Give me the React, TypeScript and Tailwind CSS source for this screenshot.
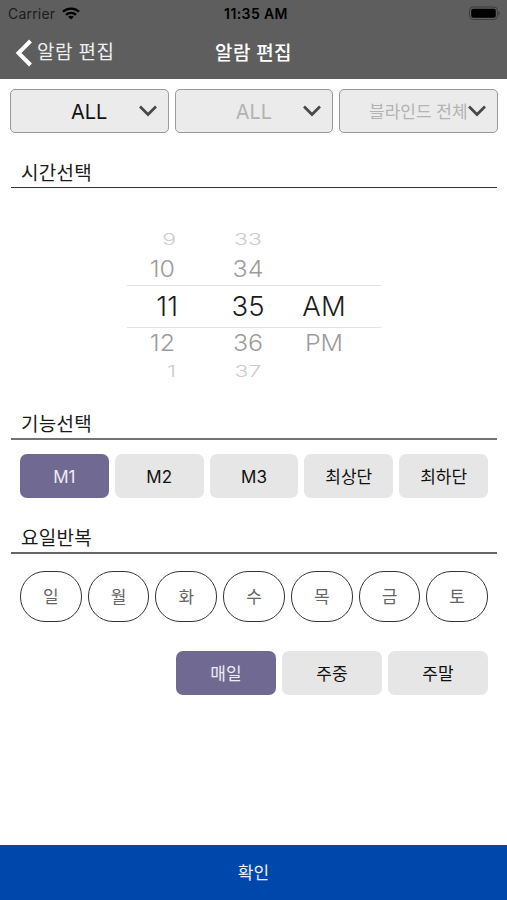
import React from "react";

interface ButtonItem {
  label: string;
  selected?: boolean;
}

interface PickerRow {
  hour: string;
  minute: string;
  period: string;
  rowClass: string;
  hourClass: string;
  textClass: string;
}

const filters = [
  { label: "ALL", textClass: "pt-[1px] pl-[1px] text-[20px] text-[#111111]" },
  { label: "ALL", textClass: "pt-[1px] pl-[1px] text-[20px] text-[#b3b3b3]" },
  { label: "블라인드 전체", textClass: "pt-[4px] text-[17px] text-[#b3b3b3]" },
];

const functions: ButtonItem[] = [
  { label: "M1", selected: true },
  { label: "M2" },
  { label: "M3" },
  { label: "최상단" },
  { label: "최하단" },
];

const days = ["일", "월", "화", "수", "목", "금", "토"];

const repeats: ButtonItem[] = [
  { label: "매일", selected: true },
  { label: "주중" },
  { label: "주말" },
];

const pickerRows: PickerRow[] = [
  { hour: "9", minute: "33", period: "", rowClass: "h-[26px]", hourClass: "pr-[5px]", textClass: "text-[23px] font-light text-[#cccccc] scale-y-[0.66]" },
  { hour: "10", minute: "34", period: "", rowClass: "h-[32px]", hourClass: "pr-[6px]", textClass: "text-[25px] font-light text-[#9c9c9c] scale-y-[0.92]" },
  { hour: "11", minute: "35", period: "AM", rowClass: "h-[43px] border-y-[1.5px] border-[#e2e2e2]", hourClass: "pr-[3px]", textClass: "text-[27.5px] font-[350] text-[#1c1c1c]" },
  { hour: "12", minute: "36", period: "PM", rowClass: "h-[31px]", hourClass: "pr-[6px]", textClass: "text-[25px] font-light text-[#9c9c9c] scale-y-[0.92]" },
  { hour: "1", minute: "37", period: "", rowClass: "h-[27px]", hourClass: "pr-[5px]", textClass: "text-[23px] font-light text-[#cccccc] scale-y-[0.66]" },
];

function StatusBar() {
  return (
    <div className="flex h-[27px] items-center justify-between pl-[8px] pr-[6px] text-black">
      <div className="flex w-[100px] items-center gap-[7px]">
        <span className="text-[14px] tracking-[0.2px] text-[#1c1c1c]">Carrier</span>
        <svg width="18" height="13" viewBox="0 0 18 13" fill="none" stroke="currentColor" strokeWidth="2.3">
          <path d="M1 4.6C5.4.5 12.6.5 17 4.6" />
          <path d="M4 7.8c2.8-2.6 7.2-2.6 10 0" />
          <path d="M9 12.5 6.1 9.7c1.6-1.4 4.2-1.4 5.8 0z" fill="currentColor" stroke="none" />
        </svg>
      </div>
      <span className="pl-[3px] text-[14px] font-semibold tracking-[0.4px]">11:35 AM</span>
      <div className="flex w-[100px] justify-end">
        <svg width="34" height="15" viewBox="0 0 34 15">
          <rect x="2.500" y="1" width="28" height="12.500" rx="3.500" fill="none" stroke="#3d3d3d" />
          <rect x="4.200" y="2.700" width="24.600" height="9" rx="2" fill="#000" />
          <path d="M31.500 5c1.800.6 1.800 4 0 4.600z" fill="#3d3d3d" />
        </svg>
      </div>
    </div>
  );
}

function NavBar() {
  return (
    <div className="grid h-[52px] grid-cols-3 items-center text-white">
      <div className="flex items-center pl-[15px]">
        <svg width="18" height="28" viewBox="0 0 18 28" fill="none" stroke="currentColor" strokeWidth="4">
          <path d="M15.500 2 3.500 14l12 12" />
        </svg>
        <span className="ml-[4px] whitespace-nowrap pt-[1px] text-[19px] tracking-[0.4px] text-[#eeeeee]">알람 편집</span>
      </div>
      <h1 className="pt-[2px] text-center text-[19px] font-medium tracking-[0.4px]">알람 편집</h1>
    </div>
  );
}

function FilterSelect({ label, textClass }: { label: string; textClass: string }) {
  return (
    <button className="flex h-[44px] flex-1 items-center justify-end rounded-[5px] border-[1.5px] border-[#999999] bg-[#ebebeb] pr-[10px]">
      <span className={`w-[98px] whitespace-nowrap text-center ${textClass}`}>{label}</span>
      <svg className="shrink-0" width="20" height="14" viewBox="0 0 20 14" fill="none" stroke="#484848" strokeWidth="2.7">
        <path d="m2 2.500 8 8 8-8" />
      </svg>
    </button>
  );
}

function SectionTitle({ children, lineClass }: { children: React.ReactNode; lineClass: string }) {
  return (
    <h2 className={`ml-[11px] mr-[10px] flex h-[32px] items-center pl-[10px] pt-[5px] text-[19px] tracking-[0.3px] text-[#1a1a1a] ${lineClass}`}>
      {children}
    </h2>
  );
}

function OptionButton({ label, selected }: ButtonItem) {
  return (
    <button
      className={`h-[44px] flex-1 rounded-[7px] pt-[3px] text-[17px] ${
        selected ? "bg-[#706a92] text-[#eeecf5]" : "bg-[#e6e6e6] text-[#111111]"
      }`}
    >
      {label}
    </button>
  );
}

function TimePicker() {
  return (
    <div className="ml-[127px] mt-[39px] w-[254px]">
      {pickerRows.map((row) => (
        <div key={row.hour} className={`flex items-center ${row.rowClass}`}>
          <span className={`w-[54px] text-right leading-none ${row.hourClass} ${row.textClass}`}>{row.hour}</span>
          <span className={`ml-[32px] w-[70px] text-center leading-none ${row.textClass}`}>{row.minute}</span>
          <span className={`ml-[6px] w-[70px] text-center leading-none ${row.textClass}`}>{row.period}</span>
        </div>
      ))}
    </div>
  );
}

export default function App() {
  return (
    <div className="flex h-[900px] w-[507px] flex-col overflow-hidden bg-white font-['Inter','Noto_Sans_CJK_KR',sans-serif]">
      <header className="h-[79px] shrink-0 bg-[#5e5e5e]">
        <StatusBar />
        <NavBar />
      </header>

      <main className="flex-1">
        <div className="flex gap-[6px] px-[9px] pl-[10px] pt-[10px]">
          {filters.map((filter, i) => (
            <FilterSelect key={i} {...filter} />
          ))}
        </div>

        <div className="mt-[23px]">
          <SectionTitle lineClass="border-b-[1.5px] border-[#333333]">시간선택</SectionTitle>
        </div>
        <TimePicker />

        {/* Blind function */}
        <div className="mt-[22px]">
          <SectionTitle lineClass="border-b-2 border-[#737373]">기능선택</SectionTitle>
        </div>
        <div className="mt-[14px] flex gap-[6px] pl-[20px] pr-[19px]">
          {functions.map((item) => (
            <OptionButton key={item.label} {...item} />
          ))}
        </div>

        {/* Repeat days */}
        <div className="mt-[24px]">
          <SectionTitle lineClass="border-b-2 border-[#666666]">요일반복</SectionTitle>
        </div>
        <div className="mt-[17px] flex gap-[6px] pl-[20px] pr-[19px]">
          {days.map((day) => (
            <button key={day} className="h-[51px] flex-1 rounded-[25px] border-[1.5px] border-[#333333] pt-[2px] text-[17px] text-[#666666]">
              {day}
            </button>
          ))}
        </div>
        <div className="ml-[176px] mr-[19px] mt-[29px] flex gap-[6px]">
          {repeats.map((item) => (
            <OptionButton key={item.label} {...item} />
          ))}
        </div>
      </main>

      <button className="h-[55px] shrink-0 bg-[#0047ab] pt-[2px] text-[17px] text-[#e8effa]">확인</button>
    </div>
  );
}
